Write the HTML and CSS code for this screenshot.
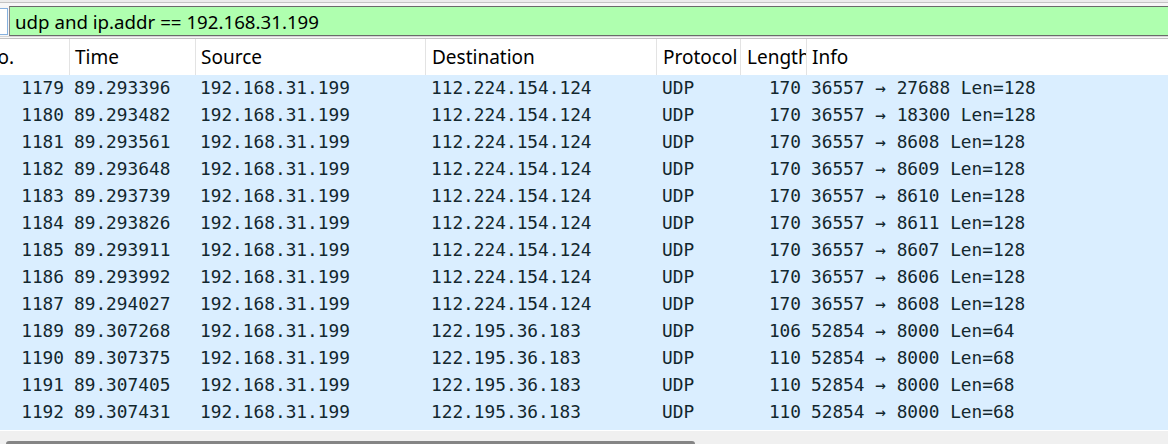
FILE: index.html
```html
<!DOCTYPE html>
<html>
<head>
<meta charset="utf-8">
<link rel="stylesheet" href="styles.css">
</head>
<body>
<div class="app">
  <div class="filterbar">
    <div class="line l1"></div>
    <div class="line l2"></div>
    <div class="line l3"></div>
    <div class="filter-row">
      <div class="bookmark"></div>
      <div class="filter-input">udp and ip.addr == 192.168.31.199</div>
    </div>
    <div class="line l4"></div>
    <div class="line l5"></div>
    <div class="line l6"></div>
  </div>
  <div class="list">
    <div class="table">
      <div class="hrow">
        <div class="hc first">No.</div>
        <div class="hc">Time</div>
        <div class="hc">Source</div>
        <div class="hc">Destination</div>
        <div class="hc">Protocol</div>
        <div class="hc">Length</div>
        <div class="hc last">Info</div>
      </div>
      <div class="rows">
        <div class="row"><span class="c num">1179</span><span class="c time">89.293396</span><span class="c src">192.168.31.199</span><span class="c dst">112.224.154.124</span><span class="c proto">UDP</span><span class="c len">170</span><span class="c info">36557 → 27688 Len=128</span></div>
        <div class="row"><span class="c num">1180</span><span class="c time">89.293482</span><span class="c src">192.168.31.199</span><span class="c dst">112.224.154.124</span><span class="c proto">UDP</span><span class="c len">170</span><span class="c info">36557 → 18300 Len=128</span></div>
        <div class="row"><span class="c num">1181</span><span class="c time">89.293561</span><span class="c src">192.168.31.199</span><span class="c dst">112.224.154.124</span><span class="c proto">UDP</span><span class="c len">170</span><span class="c info">36557 → 8608 Len=128</span></div>
        <div class="row"><span class="c num">1182</span><span class="c time">89.293648</span><span class="c src">192.168.31.199</span><span class="c dst">112.224.154.124</span><span class="c proto">UDP</span><span class="c len">170</span><span class="c info">36557 → 8609 Len=128</span></div>
        <div class="row"><span class="c num">1183</span><span class="c time">89.293739</span><span class="c src">192.168.31.199</span><span class="c dst">112.224.154.124</span><span class="c proto">UDP</span><span class="c len">170</span><span class="c info">36557 → 8610 Len=128</span></div>
        <div class="row"><span class="c num">1184</span><span class="c time">89.293826</span><span class="c src">192.168.31.199</span><span class="c dst">112.224.154.124</span><span class="c proto">UDP</span><span class="c len">170</span><span class="c info">36557 → 8611 Len=128</span></div>
        <div class="row"><span class="c num">1185</span><span class="c time">89.293911</span><span class="c src">192.168.31.199</span><span class="c dst">112.224.154.124</span><span class="c proto">UDP</span><span class="c len">170</span><span class="c info">36557 → 8607 Len=128</span></div>
        <div class="row"><span class="c num">1186</span><span class="c time">89.293992</span><span class="c src">192.168.31.199</span><span class="c dst">112.224.154.124</span><span class="c proto">UDP</span><span class="c len">170</span><span class="c info">36557 → 8606 Len=128</span></div>
        <div class="row"><span class="c num">1187</span><span class="c time">89.294027</span><span class="c src">192.168.31.199</span><span class="c dst">112.224.154.124</span><span class="c proto">UDP</span><span class="c len">170</span><span class="c info">36557 → 8608 Len=128</span></div>
        <div class="row"><span class="c num">1189</span><span class="c time">89.307268</span><span class="c src">192.168.31.199</span><span class="c dst">122.195.36.183</span><span class="c proto">UDP</span><span class="c len">106</span><span class="c info">52854 → 8000 Len=64</span></div>
        <div class="row"><span class="c num">1190</span><span class="c time">89.307375</span><span class="c src">192.168.31.199</span><span class="c dst">122.195.36.183</span><span class="c proto">UDP</span><span class="c len">110</span><span class="c info">52854 → 8000 Len=68</span></div>
        <div class="row"><span class="c num">1191</span><span class="c time">89.307405</span><span class="c src">192.168.31.199</span><span class="c dst">122.195.36.183</span><span class="c proto">UDP</span><span class="c len">110</span><span class="c info">52854 → 8000 Len=68</span></div>
        <div class="row"><span class="c num">1192</span><span class="c time">89.307431</span><span class="c src">192.168.31.199</span><span class="c dst">122.195.36.183</span><span class="c proto">UDP</span><span class="c len">110</span><span class="c info">52854 → 8000 Len=68</span></div>
      </div>
    </div>
  </div>
  <div class="hscroll"><div class="thumb"></div></div>
</div>
</body>
</html>
```

FILE: styles.css
```css
html, body {
  margin: 0;
  padding: 0;
  background: #ffffff;
}

.app {
  width: 1168px;
  height: 444px;
  overflow: hidden;
  display: flex;
  flex-direction: column;
  font-family: "Noto Sans", "Open Sans", sans-serif;
  color: #000;
}

.filterbar {
  display: flex;
  flex-direction: column;
  background: #f5f5f5;
}

.line { height: 1px; }
.l1 { height: 2px; background: #ececec; }
.l2 { background: #c4c4c4; }
.l3 { height: 3px; background: #f7f7f7; }
.l4 { background: #d6d6d6; }
.l5 { background: #f7f7f7; }
.l6 { background: #c2c2c2; }

.filter-row {
  display: flex;
  height: 30px;
}

.bookmark {
  width: 7px;
  margin: 2px 1px 1px 0;
  background: #ffffff;
  border: 1px solid #86b1de;
  border-left: none;
}

.filter-input {
  flex: 1;
  background: #afffaf;
  border-top: 1px solid #6a6a6a;
  border-bottom: 1px solid #6a6a6a;
  border-left: 1px solid #8a8a8a;
  padding-left: 5px;
  font-size: 18.7px;
  line-height: 29px;
  color: #000;
  white-space: nowrap;
}

.list {
  flex: 1;
  overflow: hidden;
  background: #ffffff;
}

.table {
  margin-left: -18px;
}

.hrow, .row {
  display: grid;
  grid-template-columns: 88px 126px 230px 231px 84px 66px 1fr;
}

.hrow {
  height: 36px;
  background: #ffffff;
}

.hc {
  border-right: 1px solid #e3e3e3;
  padding-left: 5px;
  font-size: 19px;
  line-height: 37px;
  white-space: nowrap;
  overflow: hidden;
}

.hc.first { padding-left: 1px; }
.hc:nth-child(4),
.hc:nth-child(5),
.hc:nth-child(6) { padding-left: 6px; }
.hc.last { border-right: none; }

.rows {
  background: #daeeff;
  padding-bottom: 4px;
}

.row {
  height: 27px;
  font-family: "DejaVu Sans Mono", "Liberation Mono", monospace;
  font-size: 17.8px;
  line-height: 25px;
  color: #12272e;
}

.c {
  white-space: nowrap;
  overflow: hidden;
  padding-left: 4px;
}

.num { text-align: right; padding-right: 6px; }
.dst, .proto { padding-left: 5px; }
.len { text-align: right; padding-right: 6px; }

.hscroll {
  height: 13px;
  border-top: 1px solid #ffffff;
  background: #f0f0f0;
  position: relative;
}

.thumb {
  position: absolute;
  left: 6px;
  top: 10px;
  width: 689px;
  height: 6px;
  background: #858585;
  border-radius: 3px 3px 0 0;
}
```
